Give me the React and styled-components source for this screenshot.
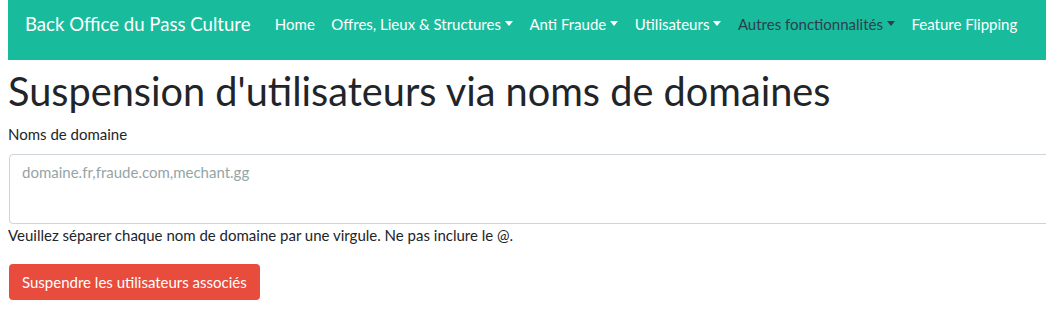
import React from 'react';
import styled, { createGlobalStyle } from 'styled-components';

const GlobalStyle = createGlobalStyle`
  body {
    margin: 0 0 0 8px;
    font-family: Lato, "Liberation Sans", sans-serif;
    font-size: 15px;
    line-height: 1.5;
    color: #212529;
    background: #fff;
    overflow: hidden;
  }
`;

const Navbar = styled.nav`
  display: flex;
  align-items: flex-start;
  height: 60px;
  box-sizing: border-box;
  padding: 5px 17px 0;
  background: #18bc9c;
  white-space: nowrap;
`;

const Brand = styled.a`
  flex-shrink: 0;
  padding-top: 5px;
  font-size: 18.6px;
  line-height: 28px;
  color: #fff;
  margin-right: 16px;
  text-decoration: none;
`;

const NavList = styled.div`
  display: flex;
  align-items: center;
  flex-shrink: 0;
`;

const NavLink = styled.a`
  display: flex;
  align-items: center;
  flex-shrink: 0;
  padding: 8px 8.25px;
  line-height: 22px;
  color: ${(p) => (p.$active ? '#2c3e50' : '#fff')};
  font-size: 15px;
  text-decoration: none;
`;

const Caret = styled.span`
  display: inline-block;
  margin-left: 4px;
  width: 0;
  height: 0;
  border-top: 5px solid currentColor;
  border-left: 4.5px solid transparent;
  border-right: 4.5px solid transparent;
  transform: translateY(-1px);
`;

const Main = styled.main`
  width: 1200px;
`;

const Title = styled.h1`
  margin: 7px 0 0;
  font-size: 39.7px;
  font-weight: 400;
  line-height: 1.2;
`;

const Label = styled.label`
  display: block;
  margin-top: 8px;
  margin-bottom: 9px;
`;

const TextArea = styled.textarea`
  display: block;
  box-sizing: border-box;
  width: 1200px;
  height: 70px;
  margin-left: 1px;
  padding: 6px 12px;
  font-family: inherit;
  font-size: 15px;
  line-height: 1.5;
  color: #212529;
  border: 1px solid #ced4da;
  border-radius: 4px;
  resize: none;
  outline: none;

  &::placeholder {
    color: #95a5a6;
  }
`;

const Help = styled.div`
  margin-top: 0;
`;

const Button = styled.button`
  display: block;
  margin: 17px 0 0 1px;
  padding: 0 13px;
  height: 36px;
  background: #e74c3c;
  color: #fff;
  border: none;
  border-radius: 4px;
  font-family: inherit;
  font-size: 15px;
`;

export default function App() {
  return (
    <>
      <GlobalStyle />
      <Navbar>
        <Brand href="#">Back Office du Pass Culture</Brand>
        <NavList>
          <NavLink href="#">Home</NavLink>
          <NavLink href="#">Offres, Lieux &amp; Structures<Caret /></NavLink>
          <NavLink href="#">Anti Fraude<Caret /></NavLink>
          <NavLink href="#">Utilisateurs<Caret /></NavLink>
          <NavLink href="#" $active>Autres fonctionnalités<Caret /></NavLink>
          <NavLink href="#">Feature Flipping</NavLink>
        </NavList>
      </Navbar>
      <Main>
        <Title>Suspension d'utilisateurs via noms de domaines</Title>
        <Label>Noms de domaine</Label>
        <TextArea placeholder="domaine.fr,fraude.com,mechant.gg" />
        <Help>Veuillez séparer chaque nom de domaine par une virgule. Ne pas inclure le @.</Help>
        <Button>Suspendre les utilisateurs associés</Button>
      </Main>
    </>
  );
}
